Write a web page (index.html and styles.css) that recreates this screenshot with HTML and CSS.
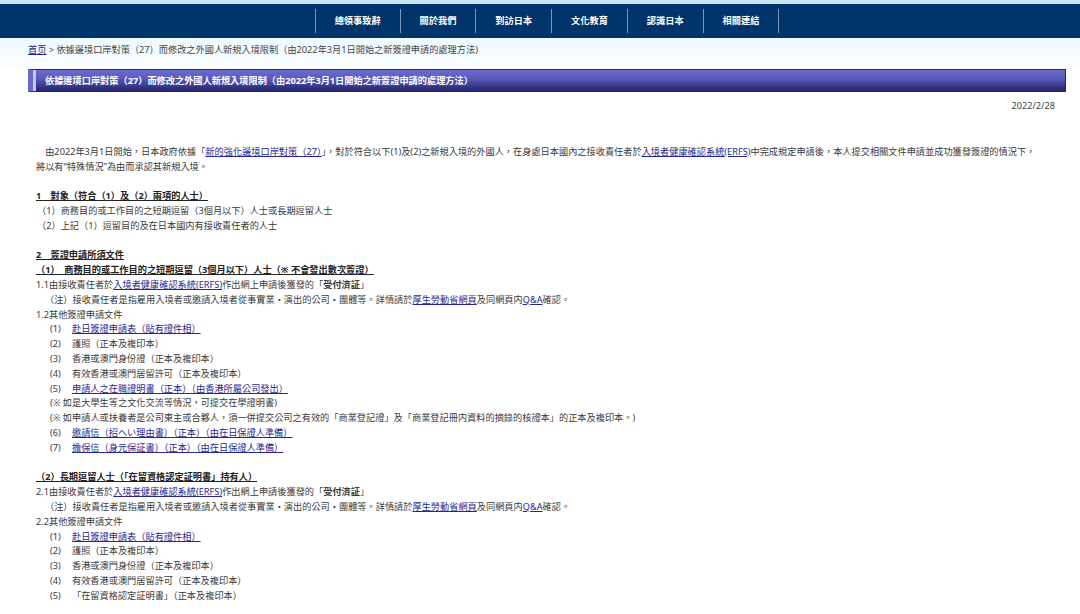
FILE: index.html
```html
<!DOCTYPE html>
<html>
<head>
  <meta charset="utf-8">
  <link rel="stylesheet" href="styles.css">
</head>
<body>
  <div class="topline"></div>
  <div class="nav">
    <a href="#">總領事致辭</a>
    <a href="#">關於我們</a>
    <a href="#">到訪日本</a>
    <a href="#">文化教育</a>
    <a href="#">認識日本</a>
    <a href="#">相關連結</a>
  </div>
  <div class="head-bg">
    <div class="crumb">
      <a href="#">首页</a> &gt; 依據邊境口岸對策（27）而修改之外國人新規入境限制（由2022年3月1日開始之新簽證申請的處理方法)
    </div>
  </div>
  <div class="main">
    <h1 class="title">依據邊境口岸對策（27）而修改之外國人新規入境限制（由2022年3月1日開始之新簽證申請的處理方法）</h1>
    <div class="date">2022/2/28</div>

    <div class="content">
      <p class="lead">由2022年3月1日開始，日本政府依據「<a href="#">新的強化邊境口岸對策（27）</a>」，對於符合以下(1)及(2)之新規入境的外國人，在身處日本國內之接收責任者於<a href="#">入境者健康確認系統(ERFS)</a>中完成規定申請後，本人提交相關文件申請並成功獲發簽證的情況下，<br>將以有“特殊情況”為由而承認其新規入境。</p>

      <div class="block">
        <p class="sec">1　對象（符合（1）及（2）兩項的人士）</p>
        <p class="sub">（1）商務目的或工作目的之短期逗留（3個月以下）人士或長期逗留人士</p>
        <p class="sub">（2）上記（1）逗留目的及在日本國内有接收責任者的人士</p>
      </div>

      <div class="block">
        <p class="sec">2　簽證申請所須文件</p>
        <p class="sec">（1）　商務目的或工作目的之短期逗留（3個月以下）人士（※ 不會發出數次簽證）</p>
        <p>1.1由接收責任者於<a href="#">入境者健康確認系統(ERFS)</a>作出網上申請後獲發的「<b>受付済証</b>」</p>
        <p class="note">（注）接收責任者是指雇用入境者或邀請入境者從事實業・演出的公司・團體等。詳情請於<a href="#">厚生勞動省網頁</a>及同網頁内<a href="#">Q&amp;A</a>確認。</p>
        <p>1.2其他簽證申請文件</p>
        <p class="item"><span class="num">(1)</span><a href="#">赴日簽證申請表（貼有證件相）</a></p>
        <p class="item"><span class="num">(2)</span>護照（正本及複印本）</p>
        <p class="item"><span class="num">(3)</span>香港或澳門身份證（正本及複印本）</p>
        <p class="item"><span class="num">(4)</span>有效香港或澳門居留許可（正本及複印本）</p>
        <p class="item"><span class="num">(5)</span><a href="#">申請人之在職證明書（正本）（由香港所屬公司發出）</a></p>
        <p class="item">(※ 如是大學生等之文化交流等情況，可提交在學證明書)</p>
        <p class="item">(※ 如申請人或扶養者是公司東主或合夥人，須一併提交公司之有效的「商業登記證」及「商業登記冊内資料的摘錄的核證本」的正本及複印本。)</p>
        <p class="item"><span class="num">(6)</span><a href="#">邀請信（招へい理由書）（正本）（由在日保證人準備）</a></p>
        <p class="item"><span class="num">(7)</span><a href="#">擔保信（身元保証書）（正本）（由在日保證人準備）</a></p>
      </div>

      <div class="block">
        <p class="sec">（2）長期逗留人士（「在留資格認定証明書」持有人）</p>
        <p>2.1由接收責任者於<a href="#">入境者健康確認系統(ERFS)</a>作出網上申請後獲發的「<b>受付済証</b>」</p>
        <p class="note">（注）接收責任者是指雇用入境者或邀請入境者從事實業・演出的公司・團體等。詳情請於<a href="#">厚生勞動省網頁</a>及同網頁内<a href="#">Q&amp;A</a>確認。</p>
        <p>2.2其他簽證申請文件</p>
        <p class="item"><span class="num">(1)</span><a href="#">赴日簽證申請表（貼有證件相）</a></p>
        <p class="item"><span class="num">(2)</span>護照（正本及複印本）</p>
        <p class="item"><span class="num">(3)</span>香港或澳門身份證（正本及複印本）</p>
        <p class="item"><span class="num">(4)</span>有效香港或澳門居留許可（正本及複印本）</p>
        <p class="item"><span class="num">(5)</span>「在留資格認定証明書」（正本及複印本）</p>
      </div>
    </div>
  </div>
</body>
</html>
```

FILE: styles.css
```css
* {
  margin: 0;
  padding: 0;
  box-sizing: border-box;
}
body {
  background: #fff;
  color: #3a3a3a;
  font-family: "Noto Sans", "Noto Sans CJK TC", sans-serif;
  font-size: 9.2px;
  line-height: 14.8px;
}
a {
  color: #27278f;
  text-decoration: underline;
}
.topline {
  height: 4px;
  background: #c6e6f3;
}
.nav {
  height: 34px;
  background: #00346a;
  display: flex;
  justify-content: center;
  align-items: center;
  padding-left: 14px;
}
.nav a {
  display: block;
  padding: 0 19px;
  line-height: 24px;
  border-left: 1px solid #7f97b3;
  color: #fff;
  font-weight: bold;
  font-size: 9.2px;
  text-decoration: none;
}
.nav a:last-child {
  border-right: 1px solid #7f97b3;
}
.head-bg {
  height: 31px;
  background: linear-gradient(#eef9fe, #fbfeff);
  padding: 5px 0 0 28px;
}
.crumb {
  color: #444;
}
.main {
  padding: 0 14px 0 28px;
}
.title {
  height: 23px;
  border: 1px solid #23236b;
  border-left: 5px solid #6a6ac9;
  box-shadow: inset 3px 0 0 #c8c8ee;
  background: linear-gradient(#6c6cd0, #5b5bbd 40%, #22226c);
  color: #fff;
  font-size: 9.2px;
  font-weight: bold;
  line-height: 21px;
  padding-left: 12px;
}
.date {
  text-align: right;
  padding-right: 11px;
  margin-top: 7px;
  color: #444;
}
.content {
  margin-top: 31px;
  padding: 0 16px 0 8px;
}
.lead {
  text-indent: 1em;
}
.block {
  margin-top: 14.8px;
}
.sec {
  font-weight: bold;
  color: #222;
  text-decoration: underline;
}
.sub {
  padding-left: 1px;
}
.note {
  padding-left: 9px;
}
.item {
  padding-left: 14px;
}
.num {
  display: inline-block;
  width: 22px;
}
```
